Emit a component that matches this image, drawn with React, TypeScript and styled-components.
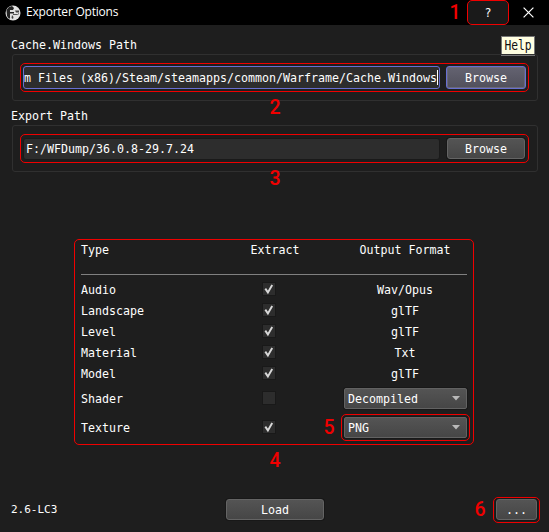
import React from "react";
import styled, { createGlobalStyle } from "styled-components";

const Global = createGlobalStyle`
  * { box-sizing: border-box; }
  html, body { margin: 0; background: #1e1e1e; }
  body { overflow: hidden; }
`;

const Window = styled.div`
  width: 549px;
  height: 532px;
  display: flex;
  flex-direction: column;
  background: #1e1e1e;
  color: #fff;
  font: 11.63px/14px "DejaVu Sans Mono", monospace;
  white-space: pre;
`;

const TitleBar = styled.header`
  flex: none;
  height: 25px;
  display: flex;
  align-items: center;
  padding-left: 5px;
  background: #000;
`;

const Title = styled.h1`
  flex: 1;
  margin: 0 0 1px 5px;
  font: 500 12px/16px "Open Sans", sans-serif;
  letter-spacing: -0.22px;
`;

const HelpButton = styled.button`
  position: relative;
  width: 42px;
  height: 25px;
  padding: 0;
  border: 1px solid #f00000;
  border-radius: 5px;
  background: #1a1a1a;
  color: #fff;
  font: inherit;
`;

const CloseButton = styled.button`
  width: 40px;
  height: 25px;
  padding: 0 1px 1px 0;
  border: 0;
  background: none;
  display: grid;
  place-items: center;
`;

const Tooltip = styled.div`
  position: absolute;
  left: 33px;
  top: 35px;
  width: 34px;
  height: 20px;
  border: 1px solid #767676;
  background: #ffffe1;
  color: #111;
  font: 11.3px/18px "DejaVu Sans Mono", monospace;
  text-align: center;
`;

const TooltipText = styled.span`
  display: block;
  transform: scaleY(1.18);
`;

const Callout = styled.span<{ $x: number; $y: number }>`
  position: absolute;
  left: ${(p) => p.$x}px;
  top: ${(p) => p.$y}px;
  width: 14px;
  color: #f00000;
  font: 500 19.5px/20px Roboto, sans-serif;
  text-align: center;
`;

const PathSection = styled.section`
  position: relative;
  flex: none;
  height: 71px;
  padding: 0 11px;
`;

const PathLabel = styled.div`
  height: 16px;
  line-height: 14px;
`;

const PathGroup = styled.div`
  height: 47px;
  margin-left: 1px;
  padding: 8px 8px 0 7px;
  border: 1px solid #303030;
  border-radius: 3px;
`;

const PathRow = styled.div`
  width: 509px;
  height: 29px;
  display: flex;
  align-items: center;
  justify-content: space-between;
  padding: 0 2px;
  border: 1px solid #f00000;
  border-radius: 5px;
`;

const PathField = styled.div<{ $focused?: boolean }>`
  width: 417px;
  height: ${(p) => (p.$focused ? 23 : 22)}px;
  display: flex;
  align-items: center;
  justify-content: ${(p) => (p.$focused ? "flex-end" : "flex-start")};
  padding: ${(p) => (p.$focused ? "0 1px 0 0" : "0 2px")};
  overflow: hidden;
  border: 1px solid ${(p) => (p.$focused ? "#686fd1" : "#1a1a1a")};
  border-radius: 3px;
  background: #2d2d2d;
`;

const Caret = styled.i`
  width: 1px;
  height: 15px;
  flex: none;
  background: #fff;
`;

const Button = styled.button<{ $w: number; $focused?: boolean }>`
  width: ${(p) => p.$w}px;
  height: ${(p) => (p.$focused ? 23 : 21)}px;
  padding: 0;
  border: 1px solid ${(p) => (p.$focused ? "#686fd1" : "#646464")};
  border-radius: 3px;
  background: ${(p) =>
    p.$focused
      ? "linear-gradient(#646371, #51505c)"
      : "linear-gradient(#545454, #464646)"};
  box-shadow: ${(p) => (p.$focused ? "inset 0 0 0 1px #6a6979" : "0 0 0 1px #181818")};
  color: #fff;
  font: inherit;
`;

const ButtonSlot = styled.div`
  width: 80px;
  display: flex;
  justify-content: center;
`;

const Table = styled.section`
  position: relative;
  flex: none;
  width: 400px;
  height: 206px;
  margin: 59px 0 0 74px;
  padding: 0 6px;
  border: 1px solid #f00000;
  border-radius: 5px;
`;

const TableRow = styled.div<{ $h: number }>`
  height: ${(p) => p.$h}px;
  display: grid;
  grid-template-columns: 127px 134px 126px;
  align-items: center;
`;

const TableHead = styled(TableRow)`
  width: 386px;
  height: 35px;
  margin-bottom: 4px;
  padding-bottom: 14px;
  border-bottom: 1px solid #808080;
`;

const Centered = styled.div`
  display: flex;
  justify-content: center;
`;

const CheckFrame = styled.span`
  width: 14px;
  height: 14px;
  margin: -1px 13px 0 0;
  display: grid;
  place-items: center;
  border: 1px solid #191919;
  background: #2d2d2d;
`;

const ComboBox = styled.div`
  position: relative;
  width: 123px;
  height: 21px;
  margin-left: 1px;
  display: flex;
  align-items: center;
  justify-content: space-between;
  padding: 0 6px 0 3px;
  border: 1px solid #626262;
  border-radius: 2px;
  background: linear-gradient(#545454, #464646);
  box-shadow: 0 0 0 1px #181818;
`;

const ComboOutline = styled.span`
  position: absolute;
  inset: -4px;
  border: 1px solid #f00000;
  border-radius: 5px;
`;

const Footer = styled.footer`
  position: relative;
  height: 27px;
  margin: 51px 9px 0 11px;
  display: grid;
  grid-template-columns: 215px 98px 1fr;
  align-items: center;
`;

const Version = styled.span`
  font-size: 11px;
`;

const MoreOutline = styled.div`
  width: 47px;
  height: 26px;
  justify-self: end;
  align-items: center;
  justify-content: center;
  border: 1px solid #f00000;
  border-radius: 5px;
  display: flex;
`;

const Logo = () => (
  <svg width="16" height="16" viewBox="0 0 16 16">
    <circle cx="8" cy="8" r="7.5" fill="#e2e2e2" />
    <path d="M1.5 5 4 2l3-1 2 2-1 2H5v2h4v1.5H5V13l-1 1-2-3z" fill="#222" />
    <path d="M10 5.5h4v2h-3zM7 10l1.5 2L8 14 6.5 13z" fill="#444" />
    <path d="M8 9.5h4.5l1.5-1" fill="none" stroke="#555" />
  </svg>
);

const Checkbox = ({ checked }: { checked: boolean }) => (
  <CheckFrame>
    {checked && (
      <svg width="12" height="12" viewBox="0 0 12 12">
        <path d="M2.3 5.6 4.9 9.4 9.2 2" fill="none" stroke="#d8d8d8" strokeWidth="1.9" />
      </svg>
    )}
  </CheckFrame>
);

const Arrow = () => (
  <svg width="8" height="5" viewBox="0 0 8 5">
    <path d="M0 0h8L4 4.5z" fill="#b9b9b9" />
  </svg>
);

const rows = [
  { type: "Audio", format: "Wav/Opus", h: 21 },
  { type: "Landscape", format: "glTF", h: 21 },
  { type: "Level", format: "glTF", h: 21 },
  { type: "Material", format: "Txt", h: 21 },
  { type: "Model", format: "glTF", h: 21 },
  { type: "Shader", format: "Decompiled", h: 29, combo: true, off: true },
  { type: "Texture", format: "PNG", h: 29, combo: true, callout: true },
];

const Spacer = styled.div`
  flex: none;
  height: 13px;
`;

export default function App() {
  return (
    <Window>
      <Global />
      <TitleBar>
        <Logo />
        <Title>Exporter Options</Title>
        <HelpButton>
          ?
          <Callout $x={-20} $y={2}>1</Callout>
          <Tooltip>
            <TooltipText>Help</TooltipText>
          </Tooltip>
        </HelpButton>
        <CloseButton>
          <svg width="11" height="11" viewBox="0 0 11 11">
            <path d="M.6.6l9.8 9.8M10.4.6.6 10.4" stroke="#fff" strokeWidth="1.2" />
          </svg>
        </CloseButton>
      </TitleBar>
      <Spacer />
      <PathSection>
        <PathLabel>Cache.Windows Path</PathLabel>
        <PathGroup>
          <PathRow>
            <PathField $focused>
              m Files (x86)/Steam/steamapps/common/Warframe/Cache.Windows
              <Caret />
            </PathField>
            <ButtonSlot>
              <Button $w={80} $focused>Browse</Button>
            </ButtonSlot>
          </PathRow>
        </PathGroup>
        <Callout $x={268} $y={60}>2</Callout>
      </PathSection>
      <PathSection>
        <PathLabel>Export Path</PathLabel>
        <PathGroup>
          <PathRow>
            <PathField>F:/WFDump/36.0.8-29.7.24</PathField>
            <ButtonSlot>
              <Button $w={78}>Browse</Button>
            </ButtonSlot>
          </PathRow>
        </PathGroup>
        <Callout $x={268} $y={60}>3</Callout>
      </PathSection>
      <Table>
        <TableHead $h={35}>
          <span>Type</span>
          <Centered>Extract</Centered>
          <Centered>Output Format</Centered>
        </TableHead>
        {rows.map((r) => (
          <TableRow key={r.type} $h={r.h}>
            <span>{r.type}</span>
            <Centered><Checkbox checked={!r.off} /></Centered>
            <Centered>
              {r.combo ? (
                <ComboBox>
                  {r.format}
                  <Arrow />
                  {r.callout && <ComboOutline />}
                  {r.callout && <Callout $x={-23} $y={0}>5</Callout>}
                </ComboBox>
              ) : (
                r.format
              )}
            </Centered>
          </TableRow>
        ))}
        <Callout $x={193} $y={211}>4</Callout>
      </Table>
      <Footer>
        <Version>2.6-LC3</Version>
        <Button $w={98}>Load</Button>
        <MoreOutline>
          <Button $w={41}>...</Button>
        </MoreOutline>
        <Callout $x={462} $y={4}>6</Callout>
      </Footer>
    </Window>
  );
}
